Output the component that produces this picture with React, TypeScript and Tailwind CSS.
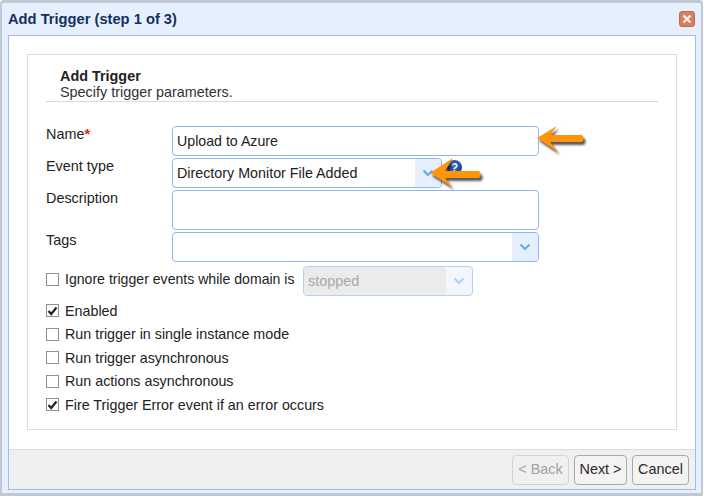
import type { ReactNode } from 'react';

const font = { fontFamily: '"Liberation Sans", Arial, sans-serif' };

function Chevron({ color = '#5aaef0' }: { color?: string }) {
  return (
    <svg width="12" height="8" viewBox="0 0 12 8" fill="none">
      <path d="M1.5 1.5 L6 6 L10.5 1.5" stroke={color} strokeWidth="2" />
    </svg>
  );
}

function Arrow({ d }: { d: string }) {
  return (
    <svg
      width="54"
      height="30"
      viewBox="0 0 54 30"
      className="overflow-visible drop-shadow-[2px_3px_1px_rgba(0,0,0,0.65)]"
    >
      <path d={d} fill="#ff9408" />
    </svg>
  );
}

function Help() {
  return (
    <span className="absolute left-[274px] top-[1px] flex h-[15px] w-[15px] items-center justify-center rounded-full bg-[radial-gradient(circle_at_35%_30%,#3f74d8,#0c2f92)] text-[12px] font-bold leading-none text-white">
      ?
    </span>
  );
}

function Row({ label, required, children }: { label: string; required?: boolean; children: ReactNode }) {
  return (
    <div className="flex items-start">
      <div className="w-[126px] text-[14.4px] leading-[16px] text-[#222]">
        {label}
        {required && <span className="font-bold text-[#e0202a]">*</span>}
      </div>
      {children}
    </div>
  );
}

function Check({ checked, label, size = 'text-[14.3px]' }: { checked?: boolean; label: string; size?: string }) {
  return (
    <label className={`flex h-[16px] items-center gap-[6px] leading-[16px] text-[#222] ${size}`}>
      <span className="flex h-[13px] w-[13px] items-center justify-center border border-[#8e8f8f] bg-white">
        {checked && (
          <svg width="11" height="10" viewBox="0 0 11 10" fill="none">
            <path d="M1.5 5 L4.2 8 L9.5 1.5" stroke="#222" strokeWidth="2.2" />
          </svg>
        )}
      </span>
      {label}
    </label>
  );
}

function Button({ children, disabled, width }: { children: ReactNode; disabled?: boolean; width: string }) {
  return (
    <button
      className={
        disabled
          ? `h-[30px] rounded-[4px] border border-[#d4d4d4] bg-[#f0f0f0] text-[14.4px] text-[#a0a0a0] ${width}`
          : `h-[30px] rounded-[4px] border border-[#a9a9a9] bg-[#f3f3f3] text-[14.4px] text-[#2a2a2a] ${width}`
      }
    >
      {children}
    </button>
  );
}

export default function App() {
  return (
    <div style={font} className="h-[500px] w-[704px] bg-white">
      <div className="flex h-[496px] w-[703px] flex-col rounded-t-[4px] border-t-[3px] border-r-[2px] border-b-[3px] border-l-[2px] border-[#c0c8d4] bg-[#e6effd] pr-[5px] pl-[6px] pb-[3px]">
        <div className="flex h-[32px] shrink-0 items-center justify-between">
          <h1 className="text-[14.7px] font-bold text-[#14305c]">Add Trigger (step 1 of 3)</h1>
          <span className="mr-[1px] flex h-[16px] w-[16px] items-center justify-center rounded-[3px] border border-[#c06a4e] bg-[#d57f62] text-white">
            <svg width="10" height="10" viewBox="0 0 10 10">
              <path d="M1.5 1.5 L8.5 8.5 M8.5 1.5 L1.5 8.5" stroke="#fdeee8" strokeWidth="2.4" />
            </svg>
          </span>
        </div>
        <div className="flex min-h-0 flex-1 flex-col border border-[#9cbde8] bg-white">
          <div className="flex-1 px-[18px] pt-[18px]">
            <div className="relative h-[376px] w-[650px] border border-[#dcdcdc] px-[18px] pt-[13px]">
              <div className="border-b border-[#d8d8d8]">
                <div className="pl-[14px] text-[14.4px] font-bold leading-[16px] text-[#222]">Add Trigger</div>
                <div className="h-[17px] pl-[14px] text-[14.4px] leading-[16px] text-[#333]">Specify trigger parameters.</div>
              </div>

              <div className="mt-[24px] flex flex-col gap-[2px]">
                <Row label="Name" required>
                  <div className="flex h-[30px] w-[367px] items-center rounded-[4px] border border-[#8db8ec] px-[4px] pt-[2px] text-[14.2px] text-[#222]">
                    Upload to Azure
                  </div>
                </Row>
                <Row label="Event type">
                  <div className="relative flex h-[30px] w-[270px] items-center justify-between rounded-[4px] border border-[#8db8ec] pl-[4px] text-[14.3px] text-[#222]">
                    <span className="pt-[2px]">Directory Monitor File Added</span>
                    <span className="flex h-full w-[26px] items-center justify-center rounded-r-[4px] bg-[#e6f0fd]">
                      <Chevron />
                    </span>
                    <Help />
                  </div>
                </Row>
                <Row label="Description">
                  <div className="h-[40px] w-[367px] rounded-[4px] border border-[#8db8ec]" />
                </Row>
                <Row label="Tags">
                  <div className="flex h-[30px] w-[367px] justify-end rounded-[4px] border border-[#8db8ec]">
                    <span className="flex h-full w-[26px] items-center justify-center rounded-r-[4px] bg-[#e6f0fd]">
                      <Chevron />
                    </span>
                  </div>
                </Row>
              </div>

              <div className="mt-[4px] flex h-[30px] items-start">
                <div className="w-[257px] shrink-0 pt-[5px]">
                  <Check size="text-[14.1px]" label="Ignore trigger events while domain is" />
                </div>
                <div className="flex h-[30px] w-[170px] rounded-[4px] border border-[#b5d2f3] bg-[#f2f7fe]">
                  <span className="flex flex-1 items-center rounded-[4px] bg-[#ebebeb] pl-[4px] pt-[2px] text-[14.4px] text-[#a8a8a8]">stopped</span>
                  <span className="flex w-[26px] items-center justify-center">
                    <Chevron color="#a9d2f5" />
                  </span>
                </div>
              </div>

              <div className="mt-[6.6px] flex flex-col gap-[7.5px]">
                <Check checked label="Enabled" />
                <Check label="Run trigger in single instance mode" />
                <Check label="Run trigger asynchronous" />
                <Check label="Run actions asynchronous" />
                <Check checked label="Fire Trigger Error event if an error occurs" />
              </div>

              {/* callout arrows drawn over the form */}
              <div className="absolute left-[509px] top-[71px]">
                <Arrow d="M0 12 L20 0 L13 9 L45 9 Q48.5 12.5 45 16 L13 16 L21 26 Z" />
              </div>
              <div className="absolute left-[402px] top-[103px]">
                <Arrow d="M0 15 L23 0 L15 13 L49 13 Q52.5 16.5 49 20 L15 20 L22 29 Z" />
              </div>
            </div>
          </div>
          <div className="flex h-[40px] shrink-0 items-center justify-end gap-[5px] border-t border-[#dcdcdc] bg-[#f0f0f0] pr-[6px]">
            <Button disabled width="w-[57px]">&lt; Back</Button>
            <Button width="w-[53px]">Next &gt;</Button>
            <Button width="w-[57px]">Cancel</Button>
          </div>
        </div>
      </div>
    </div>
  );
}
